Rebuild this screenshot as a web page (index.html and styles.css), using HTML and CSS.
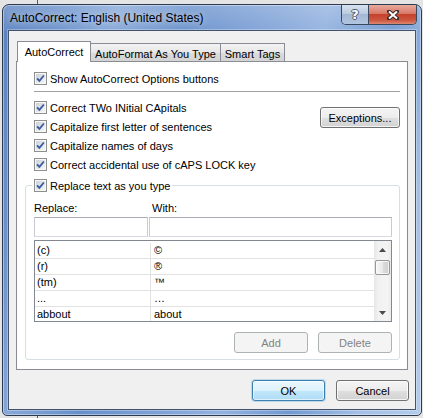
FILE: index.html
```html
<!DOCTYPE html>
<html>
<head>
<meta charset="utf-8">
<title>AutoCorrect</title>
<link rel="stylesheet" href="styles.css">
</head>
<body>
<div class="window">
  <div class="titlebar">
    <span class="title">AutoCorrect: English (United States)</span>
    <div class="caps">
      <span class="cap help">?</span>
      <span class="cap close"><svg width="12" height="10" viewBox="0 0 12 10"><path d="M2 1.5 10 8.5M10 1.5 2 8.5" stroke="#3a2a2a" stroke-width="4" stroke-linecap="square"/><path d="M2 1.5 10 8.5M10 1.5 2 8.5" stroke="#fff" stroke-width="2"/></svg></span>
    </div>
  </div>
  <div class="client">
    <div class="tabs">
      <div class="tab active">AutoCorrect</div>
      <div class="tab t2">AutoFormat As You Type</div>
      <div class="tab t3">Smart Tags</div>
    </div>
    <div class="panel">
      <div class="top">
        <div class="row"><svg class="cb" width="13" height="13" viewBox="0 0 13 13"><defs><linearGradient id="cbg" x1="0" y1="0" x2="1" y2="1"><stop offset="0" stop-color="#cdd1d7"/><stop offset="1" stop-color="#f5f6f7"/></linearGradient></defs><rect x=".5" y=".5" width="12" height="12" fill="#f7f7f7" stroke="#8e8f8f"/><rect x="2" y="2" width="9" height="9" fill="url(#cbg)"/><path d="M3 6.3 5.4 8.8 9.9 3.5" fill="none" stroke="#3b5ca3" stroke-width="1.9"/></svg>Show AutoCorrect Options buttons</div>
        <div class="sep"></div>
        <div class="mid">
          <div class="col">
            <div class="row"><svg class="cb" width="13" height="13" viewBox="0 0 13 13"><rect x=".5" y=".5" width="12" height="12" fill="#f7f7f7" stroke="#8e8f8f"/><rect x="2" y="2" width="9" height="9" fill="url(#cbg)"/><path d="M3 6.3 5.4 8.8 9.9 3.5" fill="none" stroke="#3b5ca3" stroke-width="1.9"/></svg>Correct TWo INitial CApitals</div>
            <div class="row"><svg class="cb" width="13" height="13" viewBox="0 0 13 13"><rect x=".5" y=".5" width="12" height="12" fill="#f7f7f7" stroke="#8e8f8f"/><rect x="2" y="2" width="9" height="9" fill="url(#cbg)"/><path d="M3 6.3 5.4 8.8 9.9 3.5" fill="none" stroke="#3b5ca3" stroke-width="1.9"/></svg>Capitalize first letter of sentences</div>
            <div class="row"><svg class="cb" width="13" height="13" viewBox="0 0 13 13"><rect x=".5" y=".5" width="12" height="12" fill="#f7f7f7" stroke="#8e8f8f"/><rect x="2" y="2" width="9" height="9" fill="url(#cbg)"/><path d="M3 6.3 5.4 8.8 9.9 3.5" fill="none" stroke="#3b5ca3" stroke-width="1.9"/></svg>Capitalize names of days</div>
            <div class="row"><svg class="cb" width="13" height="13" viewBox="0 0 13 13"><rect x=".5" y=".5" width="12" height="12" fill="#f7f7f7" stroke="#8e8f8f"/><rect x="2" y="2" width="9" height="9" fill="url(#cbg)"/><path d="M3 6.3 5.4 8.8 9.9 3.5" fill="none" stroke="#3b5ca3" stroke-width="1.9"/></svg>Correct accidental use of cAPS LOCK key</div>
          </div>
          <div class="btn exc">Exceptions...</div>
        </div>
      </div>
      <fieldset class="group">
        <legend><span class="row"><svg class="cb" width="13" height="13" viewBox="0 0 13 13"><rect x=".5" y=".5" width="12" height="12" fill="#f7f7f7" stroke="#8e8f8f"/><rect x="2" y="2" width="9" height="9" fill="url(#cbg)"/><path d="M3 6.3 5.4 8.8 9.9 3.5" fill="none" stroke="#3b5ca3" stroke-width="1.9"/></svg>Replace text as you type</span></legend>
        <div class="labels"><span class="l1">Replace:</span><span class="l2">With:</span></div>
        <div class="inputs"><div class="tb tb1"></div><div class="tb tb2"></div></div>
        <div class="list">
          <div class="grid">
            <div class="c1">(c)</div><div class="c2">©</div>
            <div class="c1">(r)</div><div class="c2">®</div>
            <div class="c1">(tm)</div><div class="c2">™</div>
            <div class="c1">...</div><div class="c2">…</div>
            <div class="c1">abbout</div><div class="c2">about</div>
          </div>
          <div class="vscroll">
            <div class="sbbtn"><svg width="7" height="4" viewBox="0 0 7 4"><path d="M0 4 3.5 0 7 4Z" fill="#4a4a4a"/></svg></div>
            <div class="track"><div class="thumb"></div></div>
            <div class="sbbtn"><svg width="7" height="4" viewBox="0 0 7 4"><path d="M0 0 3.5 4 7 0Z" fill="#4a4a4a"/></svg></div>
          </div>
        </div>
        <div class="gbtns"><div class="btn dis">Add</div><div class="btn dis">Delete</div></div>
      </fieldset>
    </div>
    <div class="footer"><div class="btn ok">OK</div><div class="btn">Cancel</div></div>
  </div>
</div>
</body>
</html>
```
FILE: styles.css
```css
* { box-sizing: border-box; }
html, body { margin: 0; }
body {
  width: 423px;
  height: 418px;
  overflow: hidden;
  padding-top: 4px;
  font-family: "Liberation Sans", Arial, sans-serif;
  font-size: 11px;
  color: #000;
  background: linear-gradient(to right, #e4e4e4 37px, #5a5a5a 37px, #5a5a5a 38px, #e4e4e4 38px);
}
.window {
  margin-left: 2px;
  width: 420px;
  height: 412px;
  border: 1px solid #2d3a4f;
  border-radius: 7px 7px 5px 5px;
  box-shadow: inset 0 0 0 1px rgba(255,255,255,.4);
  background:
    linear-gradient(to bottom, rgba(255,255,255,.22) 0, rgba(255,255,255,.06) 25px, rgba(255,255,255,0) 26px),
    linear-gradient(105deg, #5a82c0 0%, #6a91cb 12%, #85a6d8 22%, #6790cb 35%, #7ea1d6 50%, #93b2df 62%, #7199d1 75%, #a3bfe5 88%, #b4cceb 100%);
  display: flex;
  flex-direction: column;
}
.titlebar {
  height: 25px;
  flex: none;
  display: flex;
  align-items: center;
  padding-left: 7px;
  padding-right: 4px;
}
.title {
  font-size: 12px;
  color: #000;
  text-shadow: 0 0 7px rgba(255,255,255,.8);
}
.caps {
  margin-left: auto;
  align-self: flex-start;
  width: 76px;
  height: 20px;
  display: flex;
  border: 1px solid #3a475c;
  border-top: none;
  border-radius: 0 0 5px 5px;
  overflow: hidden;
}
.cap {
  display: flex;
  align-items: center;
  justify-content: center;
}
.help {
  width: 27px;
  border-right: 1px solid #3a475c;
  background: linear-gradient(#d7e1ee, #bccbe0 45%, #a3b7d4 50%, #b3c6e0 100%);
  color: #fff;
  font-weight: bold;
  font-size: 13px;
  font-family: "DejaVu Sans", sans-serif;
  text-shadow: -1px 0 #4a566a, 1px 0 #4a566a, 0 -1px #4a566a, 0 1px #4a566a;
}
.close {
  flex: 1;
  background: linear-gradient(#e8aa9d, #d87868 45%, #c5412c 50%, #cc563f 80%, #de8771 100%);
}
.client {
  margin: 0 5px;
  height: 380px;
  flex: none;
  border: 1px solid #44536b;
  box-shadow: 0 0 0 1px rgba(255,255,255,.3);
  background: #f0f0f0;
  padding: 10px 6px 0 7px;
}
.tabs {
  display: flex;
  align-items: flex-end;
  height: 21px;
  margin-left: 1px;
  margin-bottom: -1px;
  position: relative;
  z-index: 1;
}
.tab {
  height: 19px;
  border: 1px solid #898c95;
  border-left: none;
  background: linear-gradient(#f3f3f3, #e7e7e7 50%, #dcdcdc 51%, #d3d3d3);
  display: flex;
  align-items: center;
  justify-content: center;
  padding-top: 2px;
  white-space: nowrap;
}
.tab.active {
  width: 74px;
  height: 21px;
  border-left: 1px solid #898c95;
  border-bottom: none;
  background: #fff;
  padding-top: 0;
}
.t2 { width: 130px; }
.t3 { width: 64px; }
.panel {
  width: 392px;
  height: 309px;
  border: 1px solid #898c95;
  background: #fff;
  padding: 7px 7px 0 8px;
}
.top { padding-left: 9px; }
.row {
  display: flex;
  align-items: center;
  height: 19px;
  white-space: nowrap;
}
.cb { flex: none; margin-right: 3px; display: block; }
.sep { height: 1px; background: #a0a0a0; margin-top: 3px; }
.mid { display: flex; align-items: flex-start; margin-top: 6px; }
.btn {
  height: 21px;
  border: 1px solid #707070;
  border-radius: 3px;
  background: linear-gradient(#f4f4f4, #ececec 50%, #dfdfdf 51%, #d2d2d2);
  box-shadow: inset 0 0 0 1px rgba(255,255,255,.75);
  display: flex;
  align-items: center;
  justify-content: center;
  white-space: nowrap;
}
.exc { margin-left: auto; margin-top: 9px; width: 80px; }
.group {
  margin: 2px 0 0;
  min-width: 0;
  border: 1px solid #d5dfe5;
  border-radius: 3px;
  padding: 4px 7px 6px 8px;
}
.group legend { padding: 0 2px; margin-left: -2px; }
.labels { display: flex; align-items: center; height: 18px; }
.l1 { width: 115px; }
.l2 { padding-left: 3px; }
.inputs { display: flex; gap: 1px; }
.tb {
  height: 20px;
  border: 1px solid;
  border-color: #abadb3 #c9ccd2 #d6dae0 #c9ccd2;
  background: #fff;
}
.tb1 { width: 114px; }
.tb2 { flex: 1; }
.list {
  margin-top: 3px;
  height: 82px;
  border: 1px solid #828790;
  background: #fff;
  display: flex;
}
.grid {
  flex: 1;
  display: grid;
  grid-template-columns: 115px 1fr;
  grid-auto-rows: 16px;
  align-content: start;
  padding-top: 2px;
  overflow: hidden;
}
.c1, .c2 {
  border-bottom: 1px solid #e2e2e2;
  line-height: 15px;
  white-space: nowrap;
}
.c1 { padding-left: 2px; }
.c2 { padding-left: 3px; border-left: 1px solid #e2e2e2; }
.vscroll {
  width: 17px;
  flex: none;
  display: flex;
  flex-direction: column;
  background: linear-gradient(to right, #e6e6e6, #f1f1f1 25%, #f4f4f4 75%, #ececec);
}
.sbbtn {
  height: 17px;
  flex: none;
  display: flex;
  align-items: center;
  justify-content: center;
}
.sbbtn svg { display: block; }
.track { flex: 1; padding: 2px 1px 0; }
.thumb {
  height: 15px;
  border: 1px solid #979797;
  border-radius: 2px;
  background: linear-gradient(to right, #f7f7f7, #e9e9e9 50%, #dcdcdc 51%, #d0d0d0);
  box-shadow: inset 0 0 0 1px rgba(255,255,255,.7);
}
.gbtns { display: flex; justify-content: flex-end; gap: 10px; margin-top: 10px; }
.gbtns .btn { width: 74px; }
.btn.dis {
  border-color: #adb2b5;
  background: #f4f4f4;
  box-shadow: none;
  color: #838383;
}
.footer {
  width: 393px;
  display: flex;
  justify-content: flex-end;
  gap: 11px;
  margin-top: 10px;
}
.footer .btn { width: 73px; }
.btn.ok {
  border-color: #3c7fb1;
  background: linear-gradient(#ecf7fd, #dcf1fc 50%, #c3e7fb 51%, #aedcf5);
  box-shadow: inset 0 0 0 1px rgba(255,255,255,.6), 0 0 0 1px rgba(96,170,222,.35);
}
```
